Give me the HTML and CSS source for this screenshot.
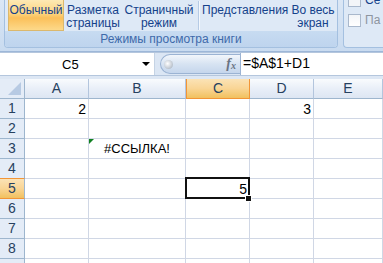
FILE: index.html
```html
<!DOCTYPE html>
<html lang="ru">
<head>
<meta charset="utf-8">
<link rel="stylesheet" href="styles.css">
</head>
<body>
<div class="ribbon">
  <div class="group">
    <div class="buttons">
      <div class="btn active w56">Обычный</div>
      <div class="btn w54">Разметка<br>страницы</div>
      <div class="btn w74">Страничный<br>режим</div>
      <div class="sep"></div>
      <div class="btn w86">Представления</div>
      <div class="btn w46">Во весь<br>экран</div>
    </div>
    <div class="glabel">Режимы просмотра книги</div>
  </div>
  <div class="group2">
    <div class="chk-row top"><span class="box checked"></span><span class="ctext">Се</span></div>
    <div class="chk-row"><span class="box"></span><span class="ctext dis">Па</span></div>
  </div>
</div>
<div class="fbar">
  <div class="namebox"><span class="nbtext">C5</span><span class="arrow"></span></div>
  <div class="pillzone">
    <div class="pill"><span class="knob"></span><span class="fx">f<sub>x</sub></span></div>
  </div>
  <div class="finput">=$A$1+D1</div>
</div>
<div class="strip"></div>
<div class="sheet">
  <div class="corner"></div>
  <div class="ch">A</div><div class="ch">B</div><div class="ch selh">C</div><div class="ch">D</div><div class="ch">E</div>

  <div class="rh">1</div><div class="c num">2</div><div class="c"></div><div class="c"></div><div class="c num">3</div><div class="c"></div>
  <div class="rh">2</div><div class="c"></div><div class="c"></div><div class="c"></div><div class="c"></div><div class="c"></div>
  <div class="rh">3</div><div class="c"></div><div class="c err"><span class="tri"></span>#ССЫЛКА!</div><div class="c"></div><div class="c"></div><div class="c"></div>
  <div class="rh">4</div><div class="c"></div><div class="c"></div><div class="c"></div><div class="c"></div><div class="c"></div>
  <div class="rh selr">5</div><div class="c"></div><div class="c"></div><div class="c num sel">5<span class="handle"></span></div><div class="c"></div><div class="c"></div>
  <div class="rh">6</div><div class="c"></div><div class="c"></div><div class="c"></div><div class="c"></div><div class="c"></div>
  <div class="rh">7</div><div class="c"></div><div class="c"></div><div class="c"></div><div class="c"></div><div class="c"></div>
  <div class="rh">8</div><div class="c"></div><div class="c"></div><div class="c"></div><div class="c"></div><div class="c"></div>
  <div class="rh"></div><div class="c"></div><div class="c"></div><div class="c"></div><div class="c"></div><div class="c"></div>
</div>
</body>
</html>
```
FILE: styles.css
```css
html, body {
  margin: 0;
  padding: 0;
}
body {
  width: 383px;
  height: 263px;
  overflow: hidden;
  background: #fff;
  font-family: "Liberation Sans", Arial, sans-serif;
}

/* ribbon */
.ribbon {
  height: 52px;
  box-sizing: border-box;
  display: flex;
  gap: 5px;
  padding-left: 4px;
  background: linear-gradient(#dbe7f5, #c9dbf0);
  border-bottom: 1px solid #9db7d8;
}
.group {
  width: 334px;
  height: 48px;
  box-sizing: border-box;
  display: flex;
  flex-direction: column;
  border: 1px solid #a4c0e0;
  border-top: none;
  border-radius: 0 0 4px 4px;
  background: #dee9f6;
  overflow: hidden;
}
.buttons {
  height: 31px;
  display: flex;
  padding-left: 3px;
  gap: 2px;
}
.btn {
  font-size: 12px;
  line-height: 13px;
  color: #15428b;
  text-align: center;
  padding-top: 4px;
  box-sizing: border-box;
  height: 31px;
  white-space: nowrap;
}
.w56 { width: 56px; }
.w54 { width: 54px; }
.w74 { width: 74px; }
.w86 { width: 86px; }
.w46 { width: 46px; }
.btn.active {
  background: linear-gradient(#fde9b4 0%, #fcd47e 45%, #fbc05a 60%, #fdd98a 100%);
  border: 1px solid #dbb86d;
  border-top: none;
  padding-top: 4px;
}
.sep {
  width: 1px;
  height: 29px;
  margin-top: 1px;
  background: #b6cbe5;
  border-right: 1px solid #f4f8fd;
}
.glabel {
  flex: 1;
  background: linear-gradient(#c7dbf1, #bed4ee);
  color: #3e6aaa;
  font-size: 12px;
  line-height: 16px;
  text-align: center;
}
.group2 {
  flex: 1;
  height: 48px;
  box-sizing: border-box;
  border: 1px solid #a4c0e0;
  border-top: none;
  border-right: none;
  border-radius: 0 0 0 4px;
  background: #dee9f6;
  padding-left: 4px;
}
.chk-row {
  display: flex;
  align-items: center;
  gap: 4px;
  height: 20px;
}
.chk-row.top {
  margin-top: -10px;
}
.box {
  width: 11px;
  height: 11px;
  border: 1px solid #a9b8cc;
  background: linear-gradient(#f3f5f8, #ffffff);
  display: inline-block;
}
.box.checked {
  background: #f3f5f8;
}
.ctext {
  font-size: 12px;
  color: #15428b;
}
.ctext.dis {
  color: #8d959f;
}

/* formula bar */
.fbar {
  height: 23px;
  display: flex;
  background: #dbe6f4;
  border-top: 1px solid #b4c6dd;
  box-sizing: border-box;
}
.namebox {
  width: 155px;
  background: #fff;
  display: flex;
  align-items: center;
  border-right: 1px solid #c5d3e4;
  box-sizing: border-box;
}
.nbtext {
  font-size: 13px;
  color: #000;
  margin-left: 62px;
}
.arrow {
  margin-left: auto;
  margin-right: 4px;
  width: 0;
  height: 0;
  border-left: 4px solid transparent;
  border-right: 4px solid transparent;
  border-top: 4px solid #000;
}
.pillzone {
  width: 85px;
  padding: 1px 0 1px 5px;
  box-sizing: border-box;
}
.pill {
  height: 20px;
  border-radius: 10px 0 0 10px;
  border: 1px solid #9bb3d3;
  border-right: none;
  background: linear-gradient(#f2f6fb, #d7e3f2 50%, #c5d6ec);
  display: flex;
  align-items: center;
  box-sizing: border-box;
}
.knob {
  width: 9px;
  height: 9px;
  border-radius: 50%;
  margin-left: 3px;
  background: radial-gradient(circle at 40% 40%, #ffffff, #c4cbd4 60%, #9aa5b2);
}
.fx {
  margin-left: auto;
  margin-right: 4px;
  font-family: "Liberation Serif", serif;
  font-style: italic;
  font-weight: bold;
  font-size: 14px;
  color: #6a7383;
  line-height: 1;
}
.fx sub {
  font-size: 10px;
  vertical-align: -1px;
}
.finput {
  flex: 1;
  background: #fff;
  border-left: 1px solid #9bb3d3;
  font-size: 14px;
  line-height: 21px;
  padding-left: 2px;
  color: #000;
}
.strip {
  height: 4px;
  background: #dde7f4;
  border-top: 1px solid #b4c6dd;
  box-sizing: border-box;
}

/* sheet */
.sheet {
  display: grid;
  grid-template-columns: 25px 64px 97px 64px 64px 1fr;
  grid-auto-rows: 20px;
}
.corner {
  background: #e4ecf7;
  border-right: 1px solid #9eb6ce;
  border-bottom: 1px solid #9eb6ce;
  position: relative;
}
.corner::after {
  content: "";
  position: absolute;
  right: 3px;
  bottom: 3px;
  width: 0;
  height: 0;
  border-left: 13px solid transparent;
  border-bottom: 13px solid #b7cae3;
}
.ch {
  background: linear-gradient(#f9fbfd, #e9eff8 50%, #dde6f3);
  border-right: 1px solid #b3c5dd;
  border-bottom: 1px solid #9eb6ce;
  color: #27415f;
  font-size: 14px;
  line-height: 19px;
  text-align: center;
}
.ch.selh {
  background: linear-gradient(#fbe3b6, #f9d595 50%, #f1c15f);
  border-bottom: 1px solid #f29536;
  border-right: 1px solid #f29536;
  border-left: 1px solid #f29536;
}
.rh {
  background: #e4ecf7;
  border-right: 1px solid #9eb6ce;
  border-bottom: 1px solid #9eb6ce;
  color: #27415f;
  font-size: 14px;
  line-height: 19px;
  text-align: center;
}
.rh.selr {
  background: linear-gradient(#fbe3b6, #f9d595 50%, #f1c15f);
  border-bottom: 1px solid #f29536;
  border-top: 1px solid #f29536;
  margin-top: -1px;
}
.c {
  border-right: 1px solid #d0d7e5;
  border-bottom: 1px solid #d0d7e5;
  font-size: 14px;
  line-height: 20px;
  padding: 0 2px;
  color: #000;
  position: relative;
}
.c.num {
  text-align: right;
}
.c.err {
  text-align: center;
  font-size: 13px;
}
.tri {
  position: absolute;
  left: 0;
  top: 0;
  width: 0;
  height: 0;
  border-top: 5px solid #108020;
  border-right: 5px solid transparent;
}
.c.sel::after {
  content: "";
  position: absolute;
  left: -1px;
  top: -2px;
  right: -1px;
  bottom: -1px;
  border: 2px solid #111;
}
.handle {
  position: absolute;
  right: -3px;
  bottom: -4px;
  width: 5px;
  height: 5px;
  background: #111;
  border: 1px solid #fff;
  z-index: 2;
}
```
